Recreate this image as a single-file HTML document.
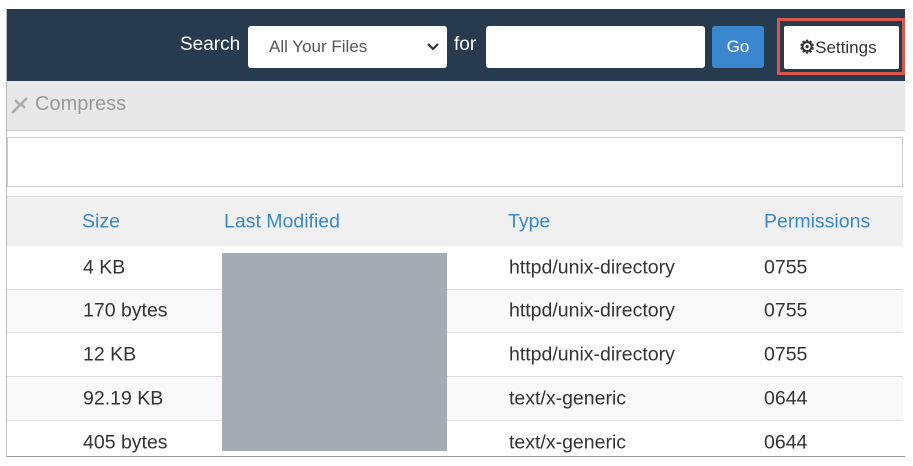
<!DOCTYPE html>
<html><head><style>
body{margin:0;width:913px;height:466px;background:#fff;position:relative;overflow:hidden;font-family:"Liberation Sans",sans-serif}
.a{position:absolute}
.hdr{left:6px;top:9px;width:899px;height:72px;background:#283a4e}
.tb{left:6px;top:81px;width:899px;height:49px;background:#e8e8e8;border-bottom:1px solid #d0d0d0}
.frame{left:6px;top:9px;width:899px;height:448px;border-left:1px solid #bbb;border-bottom:1px solid #999;box-sizing:border-box}
.row{left:7px;width:896px;border-bottom:1px solid #ddd;font-size:19.5px;color:#333}
.row span,.th span{position:absolute;top:50%;transform:translateY(-50%)}
.th{left:7px;top:196px;width:896px;height:49px;background:#f0f0f0;border-top:1px solid #ddd;border-bottom:2px solid #ddd;color:#3a87cc;font-size:19.5px}
</style></head><body>
<div class="a hdr"></div>
<div class="a" style="left:180px;top:34px;color:#fff;font-size:19px">Search</div>
<div class="a" style="left:248px;top:26px;width:199px;height:42px;background:#fff;border-radius:3px"></div>
<div class="a" style="left:269px;top:37px;color:#555;font-size:17px">All Your Files</div>
<svg class="a" style="left:427px;top:42px" width="12" height="10"><path d="M1 2 L6 7 L11 2" stroke="#333" stroke-width="2.2" fill="none"/></svg>
<div class="a" style="left:454px;top:34px;color:#fff;font-size:19px">for</div>
<div class="a" style="left:486px;top:26px;width:219px;height:42px;background:#fff;border-radius:3px"></div>
<div class="a" style="left:712px;top:26px;width:52px;height:42px;background:#3a87d0;border-radius:3px;color:#fff;font-size:17px;line-height:42px;text-align:center">Go</div>
<div class="a" style="left:777px;top:18px;width:128px;height:57px;border:3px solid #d9574a;box-sizing:border-box"></div>
<div class="a" style="left:784px;top:26px;width:115px;height:43px;background:#fff;border-radius:2px;font-size:17px;color:#333;line-height:43px"><span style="margin-left:15px;font-size:18px;font-weight:bold">&#9881;</span>Settings</div>
<div class="a tb"></div>
<svg class="a" style="left:10px;top:95px" width="20" height="20"><path d="M2 18 L17 3 M11 9 L15 13 M5 5 L9 9" stroke="#aaa" stroke-width="2.5" fill="none"/></svg>
<div class="a" style="left:35px;top:93px;color:#999;font-size:20px">Compress</div>
<div class="a" style="left:7px;top:137px;width:896px;height:50px;border:1px solid #ccc;box-sizing:border-box"></div>
<div class="a th"><span style="left:75px">Size</span><span style="left:217px">Last Modified</span><span style="left:501px">Type</span><span style="left:757px">Permissions</span></div>
<div class="a row" style="top:246px;height:43px;background:#fff"><span style="left:76px">4 KB</span><span style="left:502px">httpd/unix-directory</span><span style="left:757px">0755</span></div>
<div class="a row" style="top:290px;height:42px;background:#f9f9f9"><span style="left:76px">170 bytes</span><span style="left:502px">httpd/unix-directory</span><span style="left:757px">0755</span></div>
<div class="a row" style="top:333px;height:43px;background:#fff"><span style="left:76px">12 KB</span><span style="left:502px">httpd/unix-directory</span><span style="left:757px">0755</span></div>
<div class="a row" style="top:377px;height:43px;background:#f9f9f9"><span style="left:76px">92.19 KB</span><span style="left:502px">text/x-generic</span><span style="left:757px">0644</span></div>
<div class="a row" style="top:421px;height:36px;background:#fff;border:none"><span style="left:76px;top:22px">405 bytes</span><span style="left:502px;top:22px">text/x-generic</span><span style="left:757px;top:22px">0644</span></div>
<div class="a" style="left:222px;top:253px;width:225px;height:198px;background:#a2acb2"></div>
<div class="a frame"></div>
</body></html>
